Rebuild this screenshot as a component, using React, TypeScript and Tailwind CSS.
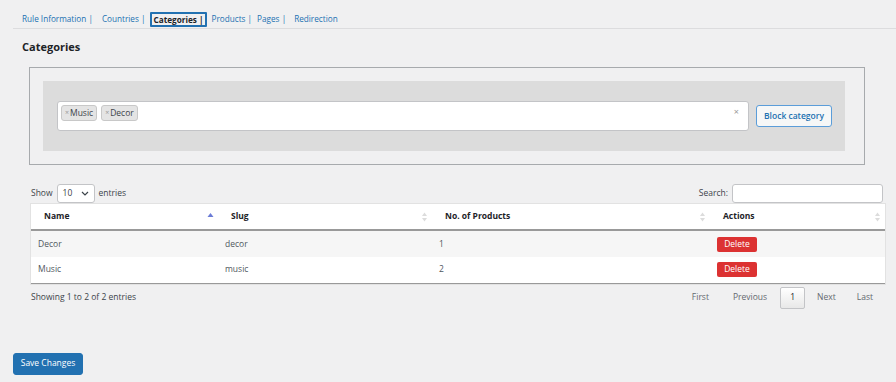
import React from "react";

const Sort = ({ active }: { active?: boolean }) =>
  active ? (
    <svg width="7" height="10" viewBox="0 0 7 10" className="shrink-0">
      <path d="M3.5 1 L6.5 5 L0.5 5 Z" fill="#6b7bd6" />
    </svg>
  ) : (
    <svg width="7" height="10" viewBox="0 0 7 10" className="shrink-0">
      <path d="M3.5 0.5 L6 4 L1 4 Z" fill="#dcdcdc" />
      <path d="M3.5 9.5 L6 6 L1 6 Z" fill="#dcdcdc" />
    </svg>
  );

export default function App() {
  const tabs = ["Rule Information |", "Countries |", "Categories |", "Products |", "Pages |", "Redirection"];
  return (
    <div
      className="w-[896px] h-[382px] bg-[#f0f0f1] text-[#3c434a] overflow-hidden"
      style={{ fontFamily: '"Open Sans", "DejaVu Sans", sans-serif' }}
    >
      <div className="ml-[13px] border-b border-[#dcdcde] h-[29px] flex items-end">
        <div className="flex items-center gap-[5px] pl-[9px] pb-[1px] text-[8.2px] text-[#2271b1]">
          {tabs.map((t, i) =>
            i === 2 ? (
              <span key={t} className="border-2 border-[#2271b1] rounded-[1px] px-[1px] h-[15px] leading-[11px] font-bold text-[#1d2327]">
                {t}
              </span>
            ) : (
              <span key={t} className={i === 1 ? "ml-[4px]" : i === 5 ? "ml-[3px]" : ""}>{t}</span>
            )
          )}
        </div>
      </div>
      <div className="pl-[22px] pt-[10px] text-[11px] font-bold text-[#1d2327] leading-[16px]">Categories</div>
      <div className="ml-[29px] mt-[12px] w-[836px] h-[98px] border border-[#a7aaad] pt-[13px] pl-[13px]">
        <div className="w-[802px] h-[70px] bg-[#dcdcdc] flex items-center pl-[14px]">
          <div className="w-[692px] h-[30px] bg-white border border-[#c3c4c7] rounded-[3px] relative flex items-start pt-[3px] pl-[3px] gap-[4px]">
            {["Music", "Decor"].map((t) => (
              <span key={t} className="h-[16px] px-[3px] bg-[#e4e4e4] border border-[#c8c8c8] rounded-[3px] text-[8.5px] leading-[14px] text-[#3c434a] flex items-center">
                <span className="text-[#999] text-[7px] mr-[1px]">×</span>
                {t}
              </span>
            ))}
            <span className="absolute right-[9px] top-[5px] text-[#999] text-[9px] leading-[10px]">×</span>
          </div>
          <button className="ml-[7px] w-[76px] h-[22px] border border-[#5b9dd9] rounded-[3px] bg-[#f6f7f7] text-[#2271b1] text-[8.5px] font-semibold">
            Block category
          </button>
        </div>
      </div>
      <div className="ml-[31px] w-[854px] mt-[18px]">
        <div className="flex items-center justify-between h-[20px] text-[8.5px]">
          <div className="flex items-center gap-[4px]">
            <span>Show</span>
            <div className="w-[38px] h-[19px] bg-white border border-[#c3c4c7] rounded-[3px] flex items-center justify-between px-[5px]">
              <span>10</span>
              <svg width="8" height="5" viewBox="0 0 8 5"><path d="M1 1 L4 4 L7 1" fill="none" stroke="#3c434a" strokeWidth="1.2" /></svg>
            </div>
            <span>entries</span>
          </div>
          <div className="flex items-center gap-[4px] mr-[2px]">
            <span>Search:</span>
            <div className="w-[151px] h-[19px] bg-white border border-[#c3c4c7] rounded-[3px]" />
          </div>
        </div>
        <table className="w-[854px] mt-[1px] border-collapse text-[8.5px] bg-white shadow-[0_0_0_1px_#e2e2e2]">
          <thead>
            <tr className="h-[26px] border-b-2 border-[#999]">
              {[
                ["Name", 187, true],
                ["Slug", 214, false],
                ["No. of Products", 278, false],
                ["Actions", 175, false],
              ].map(([n, w, a]) => (
                <th key={n as string} style={{ width: w as number }} className="p-0 text-left font-bold text-[#1d2327]">
                  <div className="flex items-center justify-between pl-[13px] pr-[4px]">
                    <span>{n as string}</span>
                    <Sort active={a as boolean} />
                  </div>
                </th>
              ))}
            </tr>
          </thead>
          <tbody>
            {[
              ["Decor", "decor", "1", "bg-[#f6f6f6]"],
              ["Music", "music", "2", "bg-white"],
            ].map(([a, b, c, bg], i) => (
              <tr key={a} className={`${bg} ${i === 0 ? "h-[27px]" : "h-[26px] border-b border-[#999]"}`}>
                <td className="pl-[7px] text-[#50575e]">{a}</td>
                <td className="pl-[7px] text-[#50575e]">{b}</td>
                <td className="pl-[7px] text-[#50575e]">{c}</td>
                <td className="pl-[7px]">
                  <span className="inline-flex items-center justify-center w-[40px] h-[15px] bg-[#dc3232] rounded-[2px] text-white text-[8.5px]">
                    Delete
                  </span>
                </td>
              </tr>
            ))}
          </tbody>
        </table>
        <div className="flex items-center justify-between mt-[3px] h-[22px] text-[8.5px]">
          <span>Showing 1 to 2 of 2 entries</span>
          <div className="flex items-center text-[#646970] mr-[12px]">
            <span className="mr-[24px]">First</span>
            <span className="mr-[13px]">Previous</span>
            <span className="w-[25px] h-[22px] flex items-center justify-center border border-[#c3c4c7] rounded-[2px] bg-gradient-to-b from-white to-[#e8e8e8] text-[#1d2327] mr-[12px]">1</span>
            <span className="mr-[21px]">Next</span>
            <span>Last</span>
          </div>
        </div>
      </div>
      <button className="ml-[13px] mt-[44px] w-[70px] h-[22px] bg-[#2271b1] rounded-[3px] border border-[#2271b1] text-white text-[8.5px]">
        Save Changes
      </button>
    </div>
  );
}
